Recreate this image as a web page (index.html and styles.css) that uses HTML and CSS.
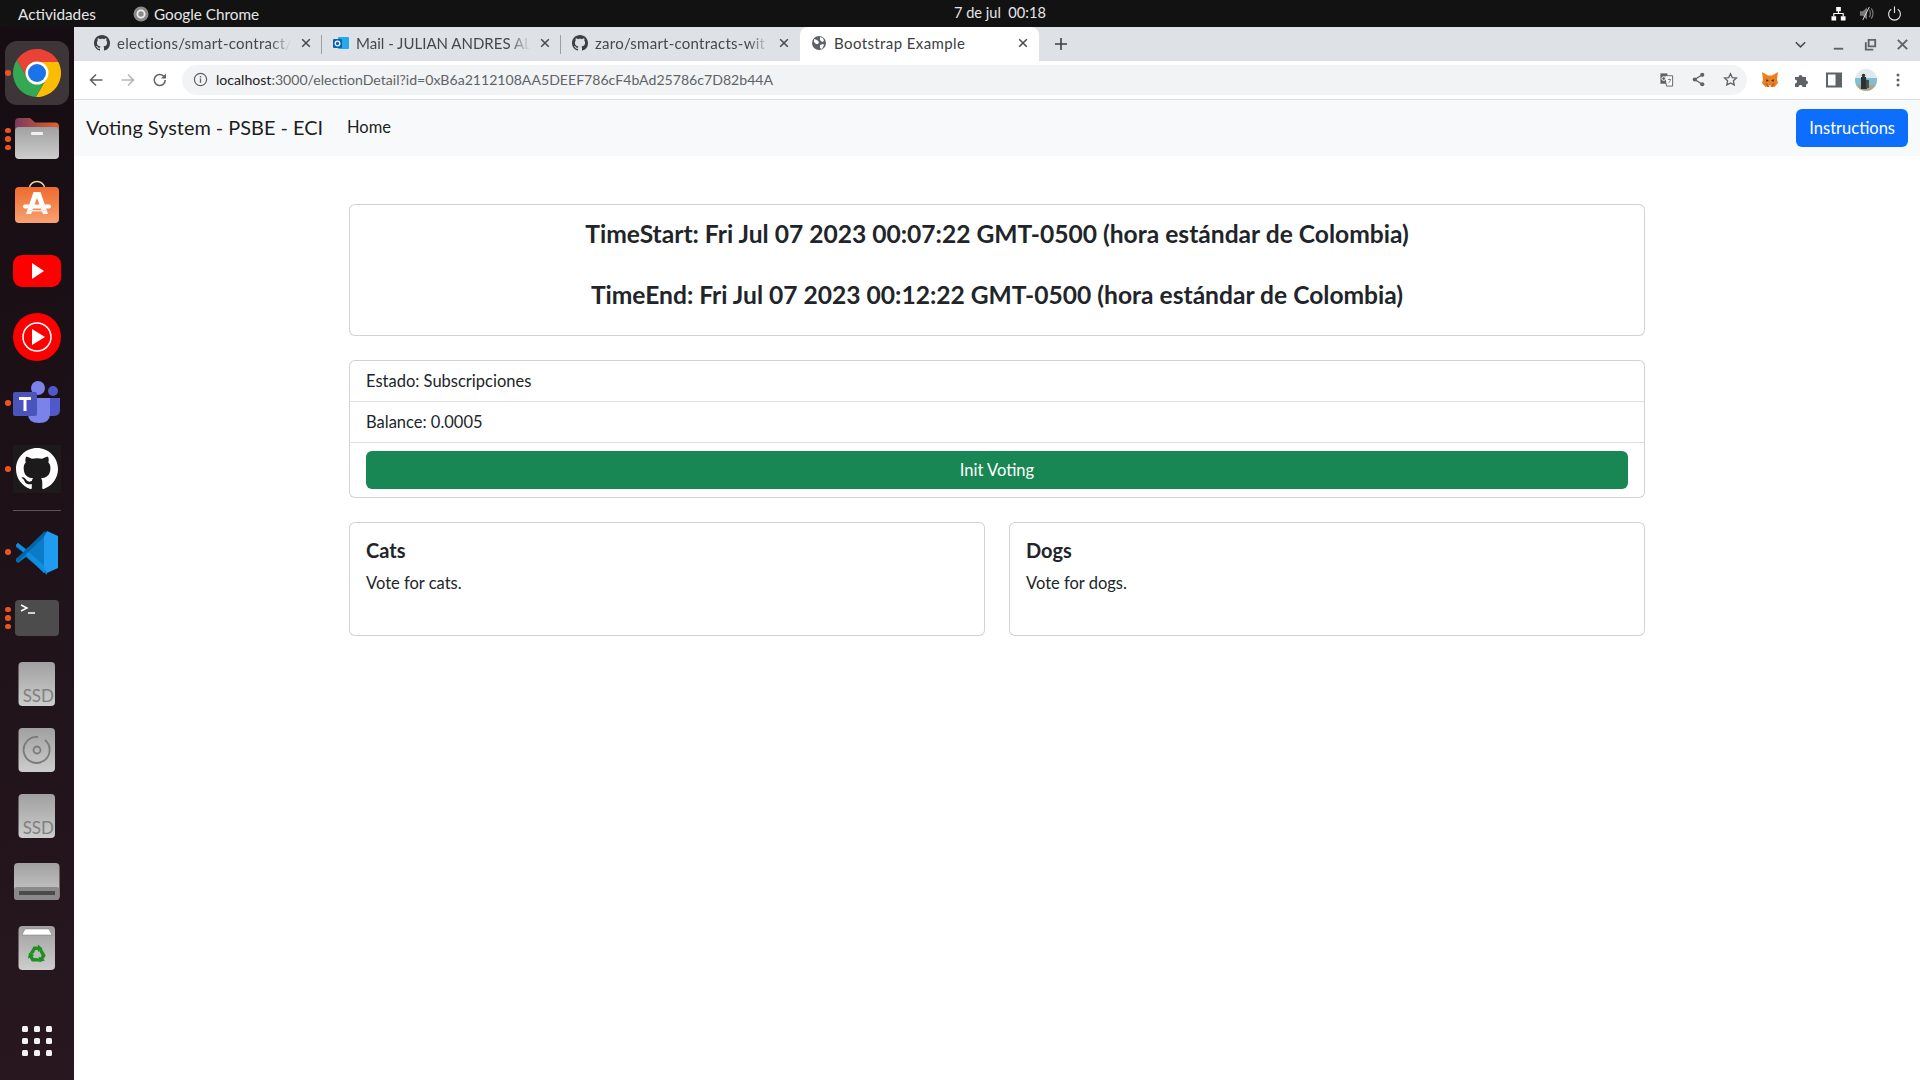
FILE: index.html
```html
<!DOCTYPE html>
<html lang="en">
<head>
  <meta charset="UTF-8">
  <title>Bootstrap Example</title>
  <link rel="stylesheet" href="styles.css">
</head>
<body>

  <svg class="sprites" width="0" height="0">
    <defs>
      <symbol id="gh" viewBox="0 0 16 16"><path d="M8 0C3.58 0 0 3.58 0 8c0 3.54 2.29 6.53 5.47 7.59.4.07.55-.17.55-.38 0-.19-.01-.82-.01-1.49-2.01.37-2.53-.49-2.69-.94-.09-.23-.48-.94-.82-1.13-.28-.15-.68-.52-.01-.53.63-.01 1.08.58 1.23.82.72 1.21 1.87.87 2.33.66.07-.52.28-.87.51-1.07-1.78-.2-3.64-.89-3.64-3.95 0-.87.31-1.59.82-2.15-.08-.2-.36-1.02.08-2.12 0 0 .67-.21 2.2.82.64-.18 1.32-.27 2-.27s1.36.09 2 .27c1.53-1.04 2.2-.82 2.2-.82.44 1.1.16 1.92.08 2.12.51.56.82 1.27.82 2.15 0 3.07-1.87 3.75-3.65 3.95.29.25.54.73.54 1.48 0 1.07-.01 1.93-.01 2.2 0 .21.15.46.55.38A8.013 8.013 0 0016 8c0-4.42-3.58-8-8-8z"/></symbol>
      <symbol id="close" viewBox="0 0 16 16"><path d="M4.200 4.200l7.600 7.600M11.800 4.200l-7.600 7.600" fill="none" stroke="currentColor" stroke-width="1.500"/></symbol>
      <linearGradient id="greyA" x1="0" y1="0" x2="0" y2="1"><stop offset="0" stop-color="#a0a0a0"/><stop offset="1" stop-color="#cdcdcd"/></linearGradient>
      <linearGradient id="folderTop" x1="0" y1="0" x2="1" y2="0"><stop offset="0" stop-color="#7a3a5e"/><stop offset="1" stop-color="#e0622c"/></linearGradient>
      <linearGradient id="bagA" x1="0" y1="0" x2="0" y2="1"><stop offset="0" stop-color="#ee6a2c"/><stop offset="1" stop-color="#f7a273"/></linearGradient>
    </defs>
  </svg>

  <header class="topbar">
    <div class="topbar-left">
      <span class="topbar-item">Actividades</span>
      <span class="topbar-app">
        <svg class="app-icon" viewBox="0 0 16 16"><circle cx="8" cy="8" r="7.500" fill="#8a8a8a"/><circle cx="8" cy="8" r="3.600" fill="none" stroke="#eee" stroke-width="1.800"/></svg>
        Google Chrome
      </span>
    </div>
    <span class="clock">7 de jul&nbsp; 00:18</span>
    <div class="topbar-right">
      <svg class="tray" viewBox="0 0 16 16"><path d="M5.500 1h5v4.500h-5zM0.500 11h5v4.500h-5zM10.500 11h5v4.500h-5z" fill="#fff"/><path d="M8 5v3M3 11V8h10v3" fill="none" stroke="#fff" stroke-width="1.200"/></svg>
      <svg class="tray" viewBox="0 0 16 16"><path d="M1 5.500h3L8.500 1.500v13L4 10.500H1z" fill="#777"/><path d="M11 4c1.500 2 1.500 6 0 8M13 2.500c2.500 3 2.500 8 0 11" fill="none" stroke="#777" stroke-width="1.300"/><path d="M11 1L4 15" stroke="#ddd" stroke-width="1"/></svg>
      <svg class="tray" viewBox="0 0 16 16"><path d="M4.500 3.500a6.300 6.300 0 1 0 7 0M8 0.500v7" fill="none" stroke="#e8e8e8" stroke-width="1.200"/></svg>
    </div>
  </header>

  <div class="desktop">
    <nav class="dock">
      <div class="dock-item">
        <span class="pips"><i></i></span>
        <svg class="dock-icon" viewBox="0 0 74 66">
          <rect x="5" y="1" width="64" height="64" rx="12" fill="#3e3539"/>
          <g transform="translate(13 9)">
            <path d="M24 24L24 13L45.330 13A24 24 0 0 0 3.810 11.030L14.470 29.500Z" fill="#ea4335"/>
            <path d="M24 13L45.330 13A24 24 0 0 1 22.860 47.970L33.530 29.500Z" fill="#fbbc04"/>
            <path d="M33.530 29.500L22.860 47.970A24 24 0 0 1 3.810 11.030L14.470 29.500Z" fill="#34a853"/>
            <circle cx="24" cy="24" r="11.500" fill="#fff"/>
            <circle cx="24" cy="24" r="9" fill="#1a73e8"/>
          </g>
        </svg>
      </div>
      <div class="dock-item">
        <span class="pips"><i></i><i></i><i></i></span>
        <svg class="dock-icon" viewBox="0 0 74 66">
          <path d="M15 16q0-4 4-4h11l5 4.500h20q4 0 4 4V32H15z" fill="url(#folderTop)"/>
          <rect x="15" y="21" width="44" height="32" rx="4" fill="url(#greyA)"/>
          <rect x="31" y="26" width="12" height="3" rx="1" fill="#f0f0f0"/>
        </svg>
      </div>
      <div class="dock-item">
        <svg class="dock-icon" viewBox="0 0 74 66">
          <path d="M29 17c1-10 15-10 16 0" fill="none" stroke="#ecd0a8" stroke-width="1.500"/>
          <rect x="15" y="15" width="44" height="36" rx="4" fill="url(#bagA)"/>
          <path d="M33.500 20h7L48 42h-5l-6-16-6 16h-5z" fill="#fff"/>
          <rect x="23" y="32.500" width="28" height="4" rx="2" fill="#fff"/>
          <rect x="27" y="38" width="20" height="1.500" fill="#ffe3d2"/>
        </svg>
      </div>
      <div class="dock-item">
        <svg class="dock-icon" viewBox="0 0 74 66">
          <rect x="13" y="17" width="48" height="32" rx="9" fill="#f00"/>
          <path d="M32 25l12 8-12 8z" fill="#fff"/>
        </svg>
      </div>
      <div class="dock-item">
        <svg class="dock-icon" viewBox="0 0 74 66">
          <circle cx="37" cy="33" r="24" fill="#f00"/>
          <circle cx="37" cy="33" r="14" fill="none" stroke="#fff" stroke-width="1.500"/>
          <path d="M32 25l13 8-13 8z" fill="#fff"/>
        </svg>
      </div>
      <div class="dock-item">
        <span class="pips"><i></i></span>
        <svg class="dock-icon" viewBox="0 0 74 66">
          <circle cx="38" cy="18" r="7" fill="#7b83eb"/>
          <circle cx="53" cy="21" r="5" fill="#5059c9"/>
          <path d="M46 28h14v12q0 6-7 6h-7z" fill="#5059c9"/>
          <path d="M28 28h22v16q0 9-11 9t-11-9z" fill="#7b83eb"/>
          <rect x="13" y="22" width="24" height="24" rx="2" fill="#4b53bc"/>
          <path d="M19 27h12v3h-4.500v11h-3V30H19z" fill="#fff"/>
        </svg>
      </div>
      <div class="dock-item">
        <span class="pips"><i></i></span>
        <svg class="dock-icon" viewBox="0 0 74 66">
          <rect x="13" y="9" width="48" height="48" fill="#1c1a1b"/>
          <use href="#gh" x="16" y="12" width="42" height="42" class="gh-white"/>
        </svg>
      </div>
      <div class="dock-sep"></div>
      <div class="dock-item">
        <span class="pips"><i></i></span>
        <svg class="dock-icon" viewBox="0 0 74 66">
          <path d="M18 24l-2 2v2l8 6-8 6v2l2 2 8-6 21 18V15L26 30z" fill="#0a7cc7"/>
          <path d="M16 26l2-2 29 25-3 5z" fill="#0f8fe0"/>
          <path d="M16 40l2 3 29-28-2-3z" fill="#0065a9"/>
          <path d="M47 12l11 5v32l-11 5L44 48V18z" fill="#1f9cf0"/>
        </svg>
      </div>
      <div class="dock-item">
        <span class="pips"><i></i><i></i><i></i></span>
        <svg class="dock-icon" viewBox="0 0 74 66">
          <rect x="15" y="15" width="44" height="36" rx="4" fill="#4c4c4c"/>
          <path d="M21 20l6 3-6 3" fill="none" stroke="#fff" stroke-width="1.500"/>
          <path d="M28 28h7" stroke="#fff" stroke-width="1.500"/>
        </svg>
      </div>
      <div class="dock-item">
        <svg class="dock-icon" viewBox="0 0 74 66">
          <rect x="18.500" y="11" width="36.500" height="44" rx="4" fill="url(#greyA)"/>
          <text x="54" y="51" text-anchor="end" class="ssd-label">SSD</text>
        </svg>
      </div>
      <div class="dock-item">
        <svg class="dock-icon" viewBox="0 0 74 66">
          <rect x="18.500" y="11" width="36.500" height="44" rx="4" fill="url(#greyA)"/>
          <path d="M45 23a13 13 0 1 1-7-3" fill="none" stroke="#7a7a7a" stroke-width="1.800"/>
          <circle cx="37" cy="33" r="3.500" fill="none" stroke="#7a7a7a" stroke-width="1.800"/>
        </svg>
      </div>
      <div class="dock-item">
        <svg class="dock-icon" viewBox="0 0 74 66">
          <rect x="18.500" y="11" width="36.500" height="44" rx="4" fill="url(#greyA)"/>
          <text x="54" y="51" text-anchor="end" class="ssd-label">SSD</text>
        </svg>
      </div>
      <div class="dock-item">
        <svg class="dock-icon" viewBox="0 0 74 66">
          <rect x="14" y="14" width="45.500" height="37" rx="4" fill="url(#greyA)"/>
          <rect x="14" y="38" width="45.500" height="13" rx="3" fill="#8a8a8a"/>
          <rect x="19" y="42" width="36" height="4" fill="#4b4b4b"/>
        </svg>
      </div>
      <div class="dock-item">
        <svg class="dock-icon" viewBox="0 0 74 66">
          <rect x="18.500" y="11" width="36.500" height="44" rx="4" fill="url(#greyA)"/>
          <path d="M22 20l3-6h24l3 6z" fill="#fff" stroke="#777" stroke-width="0.500"/>
          <g transform="translate(37 39.500)" fill="#1f8f1f">
            <path d="M-7.500-1L-3.500-8H1V-10L5.500-6 1-2.500V-4.500H-1.500L-4-.5Z"/>
            <path d="M-7.500-1L-3.500-8H1V-10L5.500-6 1-2.500V-4.500H-1.500L-4-.5Z" transform="rotate(120)"/>
            <path d="M-7.500-1L-3.500-8H1V-10L5.500-6 1-2.500V-4.500H-1.500L-4-.5Z" transform="rotate(240)"/>
          </g>
        </svg>
      </div>
      <div class="dock-item dock-apps">
        <svg class="dock-icon" viewBox="0 0 74 66">
          <g fill="#f2f2f2">
            <rect x="22" y="18" width="6" height="6" rx="1.500"/><rect x="34" y="18" width="6" height="6" rx="1.500"/><rect x="46" y="18" width="6" height="6" rx="1.500"/>
            <rect x="22" y="30" width="6" height="6" rx="1.500"/><rect x="34" y="30" width="6" height="6" rx="1.500"/><rect x="46" y="30" width="6" height="6" rx="1.500"/>
            <rect x="22" y="42" width="6" height="6" rx="1.500"/><rect x="34" y="42" width="6" height="6" rx="1.500"/><rect x="46" y="42" width="6" height="6" rx="1.500"/>
          </g>
        </svg>
      </div>
    </nav>

    <div class="browser">
      <div class="tabstrip">
        <div class="tab">
          <svg class="favicon"><use href="#gh"/></svg>
          <span class="tab-title">elections/smart-contract/</span>
          <svg class="tab-close"><use href="#close"/></svg>
        </div>
        <div class="tab tab-caps">
          <svg class="favicon" viewBox="0 0 16 16"><rect x="5" y="2" width="11" height="12" rx="1" fill="#28a8ea"/><rect x="0" y="4" width="9" height="9" rx="1" fill="#0364b8"/><circle cx="4.500" cy="8.500" r="2.300" fill="none" stroke="#fff" stroke-width="1.300"/></svg>
          <span class="tab-title">Mail - JULIAN ANDRES AL</span>
          <svg class="tab-close"><use href="#close"/></svg>
        </div>
        <div class="tab">
          <svg class="favicon"><use href="#gh"/></svg>
          <span class="tab-title">zaro/smart-contracts-wit</span>
          <svg class="tab-close"><use href="#close"/></svg>
        </div>
        <div class="tab tab-active">
          <svg class="favicon" viewBox="0 0 16 16"><circle cx="8" cy="8" r="7" fill="#5f6368"/><path d="M3 4l3 1 2 2-1 2-2 0-2-2zM9 2l3 1 1 3-2 1-2-2zM9 10l3-1 1 1-2 4-2-1z" fill="#fff"/></svg>
          <span class="tab-title">Bootstrap Example</span>
          <svg class="tab-close"><use href="#close"/></svg>
        </div>
        <svg class="new-tab" viewBox="0 0 16 16"><path d="M8 2v12M2 8h12" stroke="#3c4043" stroke-width="1.600"/></svg>
        <div class="win-controls">
          <svg class="win-btn win-list" viewBox="0 0 16 16"><path d="M3 5.500l5 5 5-5" fill="none" stroke="#45484c" stroke-width="1.600"/></svg>
          <svg class="win-btn" viewBox="0 0 16 16"><path d="M3 12.500h10" stroke="#5f6368" stroke-width="2"/></svg>
          <svg class="win-btn" viewBox="0 0 16 16"><path d="M3 5.500v8h8" fill="none" stroke="#5f6368" stroke-width="2"/><path d="M6 3h7v7H6z" fill="none" stroke="#5f6368" stroke-width="2"/></svg>
          <svg class="win-btn" viewBox="0 0 16 16"><path d="M3 3l10 10M13 3L3 13" stroke="#5f6368" stroke-width="2"/></svg>
        </div>
      </div>

      <div class="toolbar">
        <svg class="tool-icon" viewBox="0 0 16 16"><path d="M14.500 8H2.500M8 2.500L2.500 8 8 13.500" fill="none" stroke="#5f6368" stroke-width="1.600"/></svg>
        <svg class="tool-icon" viewBox="0 0 16 16"><path d="M1.500 8h12M8 2.500L13.500 8 8 13.500" fill="none" stroke="#b4b6b9" stroke-width="1.600"/></svg>
        <svg class="tool-icon" viewBox="0 0 16 16"><path d="M13.200 8a5.500 5.500 0 1 1-1.600-3.900" fill="none" stroke="#5f6368" stroke-width="1.600"/><path d="M14 1.500v5h-5z" fill="#5f6368"/></svg>
        <div class="omnibox">
          <svg class="info-icon" viewBox="0 0 16 16"><circle cx="8" cy="8" r="6.500" fill="none" stroke="#5f6368" stroke-width="1.300"/><path d="M8 7v4.500M8 4.300v1.500" stroke="#5f6368" stroke-width="1.400"/></svg>
          <span class="url"><span class="url-host">localhost</span>:3000/electionDetail?id=0xB6a2112108AA5DEEF786cF4bAd25786c7D82b44A</span>
          <div class="omni-actions">
            <svg class="omni-icon" viewBox="0 0 16 16"><path d="M1.500 1.500h7.500v11H1.500z" fill="#5f6368"/><path d="M6 4h8.500v11H8z" fill="#fff" stroke="#5f6368" stroke-width="1"/><circle cx="5" cy="7" r="2" fill="none" stroke="#fff" stroke-width="1"/><path d="M9.500 8h3.500M11 7v1M10 12l2.500-3.500" stroke="#5f6368" stroke-width="0.800" fill="none"/></svg>
            <svg class="omni-icon" viewBox="0 0 16 16"><path d="M12 3L4 8l8 5" fill="none" stroke="#5f6368" stroke-width="1.400"/><circle cx="12" cy="3" r="2.200" fill="#5f6368"/><circle cx="4" cy="8" r="2.200" fill="#5f6368"/><circle cx="12" cy="13" r="2.200" fill="#5f6368"/></svg>
            <svg class="omni-icon" viewBox="0 0 16 16"><path d="M8 1.800l1.900 4.100 4.500.5-3.300 3 .9 4.400L8 11.600l-4 2.200.9-4.400-3.300-3 4.500-.5z" fill="none" stroke="#5f6368" stroke-width="1.400"/></svg>
          </div>
        </div>
        <div class="ext-actions">
          <svg class="ext-icon" viewBox="0 0 16 16"><path d="M0 0l6 3.500h4L16 0l-1 7.500 1 3.500-3.500 4-2-.5h-5l-2 .5L0 11l1-3.500z" fill="#ec7f20"/><path d="M3 11l3 1 .5 2.500h3L10 12l3-1-2.500 4h-5z" fill="#c05f17"/><path d="M4.500 7l2.500 2-3 .5zM11.500 7L9 9l3 .5z" fill="#233447"/><path d="M6.500 13.500h3L8 15.500z" fill="#e4e4e4"/></svg>
          <svg class="ext-icon" viewBox="0 0 16 16"><path d="M1 5h3.500a2 2 0 1 1 4 0H12v3.500a2 2 0 1 1 0 4V15H8.500a2 2 0 1 0-4 0H1v-3.500a2 2 0 1 0 0-4z" fill="#5f6368"/></svg>
          <svg class="ext-icon" viewBox="0 0 16 16"><path d="M1 1.500h14v13H1z" fill="none" stroke="#5f6368" stroke-width="2"/><path d="M9.500 2h5v12h-5z" fill="#5f6368"/></svg>
          <svg class="avatar" viewBox="0 0 22 22"><defs><clipPath id="avClip"><circle cx="11" cy="11" r="11"/></clipPath></defs><g clip-path="url(#avClip)"><rect width="22" height="22" fill="#dfeaf0"/><rect y="9" width="22" height="8" fill="#7fc0cc"/><rect y="16" width="22" height="6" fill="#a9a58a"/><path d="M6 8h5l1 12H6z" fill="#2a3038"/><path d="M11 11h3v8h-3z" fill="#4a4f4a"/><circle cx="8.500" cy="6.500" r="1.800" fill="#3b3128"/></g></svg>
          <svg class="ext-icon" viewBox="0 0 16 16"><circle cx="8" cy="3" r="1.500" fill="#5f6368"/><circle cx="8" cy="8" r="1.500" fill="#5f6368"/><circle cx="8" cy="13" r="1.500" fill="#5f6368"/></svg>
        </div>
      </div>

      <div class="navbar">
        <a class="navbar-brand">Voting System - PSBE - ECI</a>
        <a class="nav-link">Home</a>
        <button class="btn btn-primary">Instructions</button>
      </div>

      <main class="container">
        <section class="card card-times">
          <h4 class="time-line">TimeStart: Fri Jul 07 2023 00:07:22 GMT-0500 (hora estándar de Colombia)</h4>
          <h4 class="time-line">TimeEnd: Fri Jul 07 2023 00:12:22 GMT-0500 (hora estándar de Colombia)</h4>
        </section>

        <section class="card">
          <div class="list-item">Estado: Subscripciones</div>
          <div class="list-item">Balance: 0.0005</div>
          <div class="list-item list-action"><button class="btn btn-success">Init Voting</button></div>
        </section>

        <div class="options">
          <section class="card option">
            <h5 class="card-title">Cats</h5>
            <p class="card-text">Vote for cats.</p>
          </section>
          <section class="card option">
            <h5 class="card-title">Dogs</h5>
            <p class="card-text">Vote for dogs.</p>
          </section>
        </div>
      </main>
    </div>
  </div>

</body>
</html>
```

FILE: styles.css
```css
* {
  box-sizing: border-box;
}

body {
  margin: 0;
  height: 1080px;
  overflow: hidden;
  display: flex;
  flex-direction: column;
  font-family: "Lato", "Noto Sans", sans-serif;
  font-size: 16.500px;
  line-height: 24px;
  color: #212529;
  background: #fff;
}

.sprites {
  position: absolute;
}

.topbar {
  height: 27px;
  flex: none;
  display: flex;
  align-items: center;
  background: #121212;
  color: #e6e6e6;
  font-size: 15.300px;
}

.topbar-left {
  width: 954px;
  flex: none;
  display: flex;
  align-items: center;
  padding-left: 18px;
}

.topbar-app {
  display: flex;
  align-items: center;
  gap: 5px;
  margin-left: 37px;
}

.app-icon {
  width: 16px;
  height: 16px;
}

.clock {
  white-space: nowrap;
  font-size: 14.600px;
  padding-bottom: 2px;
}

.topbar-right {
  margin-left: auto;
  display: flex;
  gap: 13px;
  padding-right: 18px;
}

.tray {
  width: 15px;
  height: 15px;
}

.desktop {
  flex: 1;
  display: flex;
  min-height: 0;
}

.dock {
  width: 74px;
  flex: none;
  display: flex;
  flex-direction: column;
  padding: 13px 0 6px;
  background: linear-gradient(170deg, #150d12, #28171f);
}

.dock-item {
  position: relative;
  height: 66px;
  flex: none;
}

.dock-icon {
  display: block;
  width: 74px;
  height: 66px;
}

.dock-apps {
  margin-top: auto;
}

.dock-sep {
  height: 1px;
  flex: none;
  margin: 8px 13px;
  background: #5a5357;
}

.pips {
  position: absolute;
  left: 5px;
  top: 0;
  bottom: 0;
  display: flex;
  flex-direction: column;
  justify-content: center;
  gap: 3px;
  z-index: 1;
}

.pips i {
  width: 5.500px;
  height: 5.500px;
  border-radius: 50%;
  background: #e95420;
}

.ssd-label {
  font-family: "Lato", sans-serif;
  font-size: 17px;
  fill: #808080;
}

.gh-white {
  fill: #fff;
}

.browser {
  flex: 1;
  min-width: 0;
  display: flex;
  flex-direction: column;
}

.tabstrip {
  height: 34px;
  flex: none;
  display: flex;
  align-items: center;
  padding-left: 9px;
  background: #dee1e6;
}

.tab {
  width: 239px;
  height: 34px;
  flex: none;
  display: flex;
  align-items: center;
  gap: 7px;
  padding: 0 8px 2px 11px;
  position: relative;
  font-size: 15px;
  color: #45484c;
}

.tab:not(.tab-active):not(:nth-child(3))::after {
  content: "";
  position: absolute;
  right: 0;
  top: 8px;
  height: 19px;
  width: 1px;
  background: #9aa0a6;
}

.tab-active {
  background: #fff;
  border-radius: 8px 8px 0 0;
  color: #3c4043;
}

.favicon {
  width: 16px;
  height: 16px;
  flex: none;
  fill: #3c4043;
}

.tab-title {
  flex: 1;
  min-width: 0;
  white-space: nowrap;
  letter-spacing: 0.250px;
  -webkit-mask-image: linear-gradient(90deg, #000 88%, transparent);
  mask-image: linear-gradient(90deg, #000 88%, transparent);
}

.tab-caps .tab-title {
  letter-spacing: 0;
}

.tab-active .tab-title {
  letter-spacing: 0.400px;
  -webkit-mask-image: none;
  mask-image: none;
}

.tab-close {
  width: 16px;
  height: 16px;
  flex: none;
  color: #45484c;
}

.new-tab {
  width: 16px;
  height: 16px;
  margin-left: 14px;
}

.win-controls {
  margin-left: auto;
  display: flex;
  align-items: center;
  gap: 17px;
  padding-right: 10px;
}

.win-btn {
  width: 15px;
  height: 15px;
}

.win-list {
  margin-right: 6px;
}

.toolbar {
  height: 39px;
  flex: none;
  display: flex;
  align-items: center;
  padding: 0 14px 1px 14px;
  background: #fff;
  border-bottom: 1px solid #dfdfdf;
}

.tool-icon {
  width: 16px;
  height: 16px;
  flex: none;
  margin-right: 16px;
}

.omnibox {
  width: 1565px;
  height: 30px;
  flex: none;
  margin-left: -2px;
  display: flex;
  align-items: center;
  padding: 0 9px 0 11px;
  border-radius: 15px;
  background: #f1f3f4;
  font-size: 14.100px;
}

.info-icon {
  width: 15px;
  height: 15px;
  flex: none;
  margin-right: 8px;
}

.url {
  white-space: nowrap;
  color: #5f6368;
}

.url-host {
  color: #202124;
}

.omni-actions {
  margin-left: auto;
  display: flex;
  gap: 17px;
}

.omni-icon {
  width: 15px;
  height: 15px;
}

.ext-actions {
  display: flex;
  align-items: center;
  gap: 16px;
  margin-left: 15px;
}

.ext-icon {
  width: 16px;
  height: 16px;
}

.avatar {
  width: 22px;
  height: 22px;
  margin: 0 -3px;
}

.navbar {
  height: 56px;
  flex: none;
  display: flex;
  align-items: center;
  padding: 0 12px;
  background: #f8f9fa;
}

.navbar-brand {
  font-size: 19.900px;
  padding-bottom: 2px;
  color: rgba(0, 0, 0, 0.9);
  margin-right: 24px;
}

.nav-link {
  padding-bottom: 2px;
  color: rgba(0, 0, 0, 0.9);
}

.navbar .btn {
  margin-left: auto;
}

.btn {
  height: 38px;
  padding: 6px 12px;
  border: 1px solid transparent;
  border-radius: 6px;
  font: inherit;
  color: #fff;
}

.btn-primary {
  background: #0d6efd;
}

.btn-success {
  display: block;
  width: 100%;
  background: #198754;
}

.container {
  width: 1296px;
  margin: 48px auto 0;
  display: flex;
  flex-direction: column;
  gap: 24px;
}

.card {
  border: 1px solid rgba(0, 0, 0, 0.175);
  border-radius: 6px;
  background: #fff;
}

.card-times {
  padding: 15px 16px 17px;
  text-align: center;
}

.time-line {
  margin: 0 0 32px;
  font-size: 24.600px;
  font-weight: 700;
  line-height: 28.800px;
}

.time-line:last-child {
  margin-bottom: 8px;
}

.list-item {
  padding: 8px 16px;
  border-bottom: 1px solid rgba(0, 0, 0, 0.125);
}

.list-item:last-child {
  border-bottom: 0;
}

.options {
  display: grid;
  grid-template-columns: 1fr 1fr;
  gap: 24px;
}

.option {
  padding: 15px 16px 16px;
}

.card-title {
  margin: 0 0 9px;
  font-size: 20px;
  font-weight: 700;
  line-height: 24px;
}

.card-text {
  margin: 0 0 24px;
}
```
